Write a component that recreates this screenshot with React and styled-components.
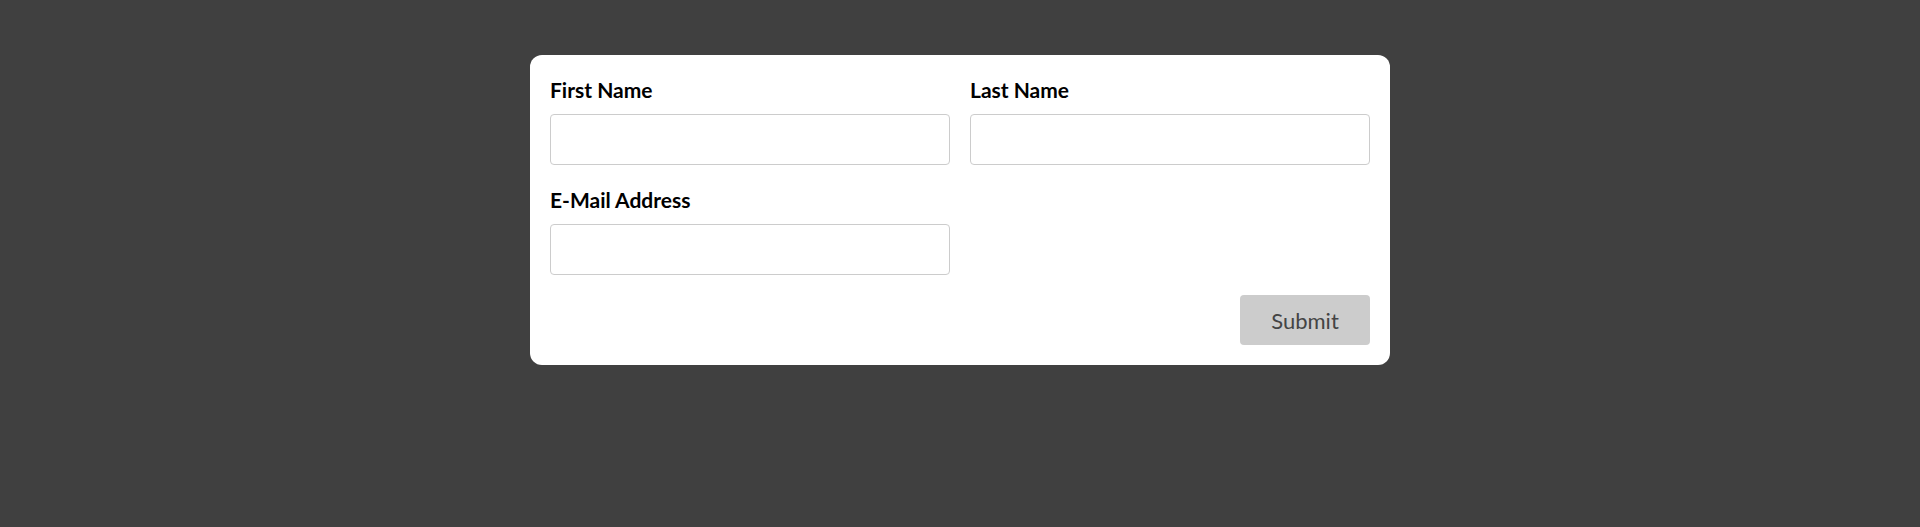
import React from "react";
import styled, { createGlobalStyle } from "styled-components";

const Global = createGlobalStyle`
  html, body { margin: 0; padding: 0; background: #404040; }
  body { font-family: "Lato", "Open Sans", sans-serif; }
  * { box-sizing: border-box; }
`;

const Page = styled.div`
  display: flex;
  justify-content: center;
  align-items: flex-start;
  padding-top: 55px;
  min-height: 527px;
`;

const Card = styled.form`
  width: 860px;
  background: #fff;
  border-radius: 12px;
  padding: 20px;
  display: flex;
  flex-direction: column;
  gap: 20px;
`;

const Grid = styled.div`
  display: grid;
  grid-template-columns: 400px 400px;
  column-gap: 20px;
  row-gap: 20px;
`;

const Field = styled.div`
  display: flex;
  flex-direction: column;
`;

const Label = styled.label`
  font-size: 21px;
  font-weight: 700;
  line-height: 30px;
  color: #000;
  margin-bottom: 9px;
`;

const Input = styled.input`
  height: 51px;
  width: 100%;
  border: 1px solid #cccccc;
  border-radius: 4px;
  background: #fff;
  font-size: 18px;
  padding: 0 12px;
  outline: none;
`;

const Actions = styled.div`
  display: flex;
  justify-content: flex-end;
`;

const Button = styled.button`
  width: 130px;
  height: 50px;
  border: none;
  border-radius: 4px;
  background: #cccccc;
  color: #444;
  font-family: "Lato", "Open Sans", sans-serif;
  font-size: 22px;
  font-weight: 400;
  cursor: pointer;
`;

export default function App() {
  return (
    <>
      <Global />
      <Page>
        <Card onSubmit={(e) => e.preventDefault()}>
          <Grid>
            <Field>
              <Label htmlFor="first">First Name</Label>
              <Input id="first" type="text" />
            </Field>
            <Field>
              <Label htmlFor="last">Last Name</Label>
              <Input id="last" type="text" />
            </Field>
            <Field>
              <Label htmlFor="email">E-Mail Address</Label>
              <Input id="email" type="email" />
            </Field>
          </Grid>
          <Actions>
            <Button type="submit">Submit</Button>
          </Actions>
        </Card>
      </Page>
    </>
  );
}
